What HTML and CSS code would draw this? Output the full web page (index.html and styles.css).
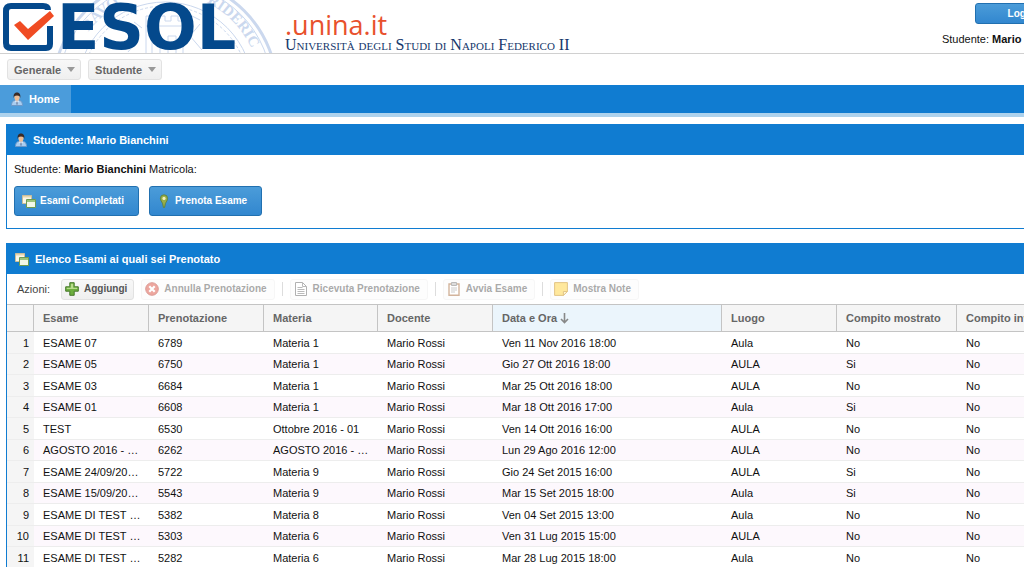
FILE: index.html
```html
<!DOCTYPE html>
<html lang="it">
<head>
<meta charset="utf-8">
<title>GESOL - Home</title>
<link rel="stylesheet" href="styles.css">
</head>
<body>
<svg class="defs" width="0" height="0" aria-hidden="true">
  <symbol id="user" viewBox="0 0 12 14">
    <path d="M.5 13.500c0-4 2-5 3.500-5h4c1.500 0 3.500 1 3.500 5z" fill="#a9cdf0" stroke="#6c98c8"/>
    <path d="M4 8.500h4l-2 4z" fill="#fff"/>
    <path d="M5.500 9.500h1v3h-1z" fill="#2c4c80"/>
    <ellipse cx="6" cy="5" rx="2.600" ry="3.700" fill="#f0bd94"/>
    <path d="M2.800 6C2 2 4 .4 6 .4S10 2 9.200 6C9 4 8 3.400 6 3.400S3 4 2.800 6z" fill="#3a2a26"/>
  </symbol>
  <symbol id="windows" viewBox="0 0 14 14">
    <path d="M.5 1.500h9v8h-9z" fill="#fbf7e8" stroke="#cdbd98"/>
    <path d="M1 2h8v1.500H1z" fill="#e4d6b0"/>
    <path d="M4.500 5.500h9v8h-9z" fill="#f3f8e8" stroke="#6e9a52"/>
    <path d="M5 6h8v2H5z" fill="#9cc47c"/>
  </symbol>
  <symbol id="pin" viewBox="0 0 14 14">
    <path d="M7 .8a3.600 3.600 0 0 1 3.600 3.600c0 2-1.600 3.600-2.200 5.200L7.600 13.400H6.400L5.600 9.600C5 8 3.400 6.400 3.400 4.400A3.600 3.600 0 0 1 7 .8z" fill="#98ae48" stroke="#5c7c34" stroke-width=".8"/>
    <circle cx="7" cy="4.400" r="1.600" fill="#f4f2c0"/>
  </symbol>
  <symbol id="plus" viewBox="0 0 14 14">
    <path d="M4.800.7h4.400v4.100h4.100v4.400H9.200v4.100H4.800V9.200H.7V4.800h4.100z" fill="#6cae3e" stroke="#47782c" stroke-linejoin="round"/>
    <path d="M5.800 1.700h2.400v4.100h4.100V7H1.700V5.800h4.100z" fill="#b8dc8c"/>
  </symbol>
  <symbol id="cancel" viewBox="0 0 14 14">
    <circle cx="7" cy="7" r="6.300" fill="#dc5040" stroke="#b83c30"/>
    <path d="M4.300 4.300l5.400 5.400M9.700 4.300L4.300 9.700" stroke="#fff" stroke-width="2.200"/>
  </symbol>
  <symbol id="page" viewBox="0 0 14 14">
    <path d="M1.500.5h7l4 4v9h-11z" fill="#fff" stroke="#666"/>
    <path d="M8.500.5v4h4M3.500 5.500h5M3.500 7.500h7M3.500 9.500h7M3.500 11.500h7" fill="none" stroke="#777"/>
  </symbol>
  <symbol id="clipboard" viewBox="0 0 14 14">
    <path d="M2 2h10v11.300H2z" fill="#fff" stroke="#a86c3c" stroke-width="1.400"/>
    <path d="M4.500.5h5v3h-5z" fill="#bbb" stroke="#777"/>
    <path d="M4 6h6M4 8h6M4 10h4" stroke="#999"/>
  </symbol>
  <symbol id="note" viewBox="0 0 14 14">
    <path d="M.6.600h12.800v8.900l-4 3.900H.6z" fill="#ffd23c" stroke="#c88c10"/>
    <path d="M9.400 13.400V9.500h4z" fill="#fff3b0" stroke="#c88c10"/>
  </symbol>
</svg>
<div class="app">
  <header class="banner">
    <svg class="seal" viewBox="0 0 230 53" aria-hidden="true">
      <defs><path id="ring" d="M20 88a95 95 0 0 1 190 0"/></defs>
      <g fill="none" stroke="#cbd8ee">
        <circle cx="115" cy="90" r="112" stroke-width="3"/>
        <circle cx="115" cy="90" r="107"/>
        <circle cx="115" cy="90" r="88"/>
        <circle cx="115" cy="90" r="84" stroke-dasharray="3 2"/>
        <path d="M96 53V16h6v5h6v-5h7v5h6v-5h7v5h5v32M96 26h37M102 53V36h8v17M118 53V36h8v17M76 30l12 10-10 12M150 24l-10 12 12 14M84 22l8 6M142 16l8 4"/>
      </g>
      <g class="motto">
        <text><textPath href="#ring" startOffset="60">RAVO</textPath></text>
        <text><textPath href="#ring" startOffset="192">RIDERIC</textPath></text>
      </g>
    </svg>
    <a class="brand" href="#" aria-label="GESOL unina.it">
      <svg class="check" viewBox="0 0 52 50" aria-hidden="true">
        <path d="M45 7Q45 3 40 3H8Q3 3 3 8v32q0 5 5 5h35q4 0 4-4V23" fill="none" stroke="#04498c" stroke-width="6"/>
        <path d="M11 22l6-4 8 8L47 8l4 5-26 24z" fill="#f04c23"/>
      </svg>
      <span class="word">ESOL</span>
      <span class="owner"><span class="domain">.unina.it</span><span class="university">Università degli Studi di Napoli Federico II</span></span>
    </a>
    <div class="account">
      <button class="btn logout" type="button">Logout</button>
      <span>Studente: <b>Mario Bianchini</b></span>
    </div>
  </header>
  <nav class="menus">
    <button class="tool menu" type="button">Generale</button>
    <button class="tool menu" type="button">Studente</button>
  </nav>
  <nav class="tabs"><a class="tab" href="#"><svg class="icon small"><use href="#user"/></svg>Home</a></nav>
  <main>
    <section class="panel">
      <h2><svg class="icon small"><use href="#user"/></svg>Studente: Mario Bianchini</h2>
      <div class="details">
        <p>Studente: <b>Mario Bianchini</b> Matricola:</p>
        <div class="buttons">
          <button class="btn" type="button"><svg class="icon"><use href="#windows"/></svg>Esami Completati</button>
          <button class="btn" type="button"><svg class="icon"><use href="#pin"/></svg>Prenota Esame</button>
        </div>
      </div>
    </section>
    <section class="panel">
      <h2><svg class="icon"><use href="#windows"/></svg>Elenco Esami ai quali sei Prenotato</h2>
      <div class="actions">
        <span class="label">Azioni:</span>
        <button class="tool" type="button"><svg class="icon"><use href="#plus"/></svg>Aggiungi</button>
        <button class="tool" type="button" disabled><svg class="icon"><use href="#cancel"/></svg>Annulla Prenotazione</button>
        <i class="sep"></i>
        <button class="tool" type="button" disabled><svg class="icon"><use href="#page"/></svg>Ricevuta Prenotazione</button>
        <i class="sep"></i>
        <button class="tool" type="button" disabled><svg class="icon"><use href="#clipboard"/></svg>Avvia Esame</button>
        <i class="sep"></i>
        <button class="tool" type="button" disabled><svg class="icon"><use href="#note"/></svg>Mostra Note</button>
      </div>
      <table>
        <colgroup><col class="c-num"><col class="c-std"><col class="c-std"><col class="c-mat"><col class="c-std"><col class="c-date"><col class="c-std"><col class="c-shown"><col></colgroup>
        <thead><tr><th></th><th>Esame</th><th>Prenotazione</th><th>Materia</th><th>Docente</th><th class="sorted">Data e Ora <svg class="arrow" viewBox="0 0 9 11"><path d="M4.500 0v9M1 6l3.500 3.500L8 6" fill="none" stroke="#888" stroke-width="1.600"/></svg></th><th>Luogo</th><th>Compito mostrato</th><th>Compito inviato</th></tr></thead>
        <tbody>
          <tr><td>1</td><td>ESAME 07</td><td>6789</td><td>Materia 1</td><td>Mario Rossi</td><td>Ven 11 Nov 2016 18:00</td><td>Aula</td><td>No</td><td>No</td></tr>
          <tr><td>2</td><td>ESAME 05</td><td>6750</td><td>Materia 1</td><td>Mario Rossi</td><td>Gio 27 Ott 2016 18:00</td><td>AULA</td><td>Si</td><td>No</td></tr>
          <tr><td>3</td><td>ESAME 03</td><td>6684</td><td>Materia 1</td><td>Mario Rossi</td><td>Mar 25 Ott 2016 18:00</td><td>AULA</td><td>No</td><td>No</td></tr>
          <tr><td>4</td><td>ESAME 01</td><td>6608</td><td>Materia 1</td><td>Mario Rossi</td><td>Mar 18 Ott 2016 17:00</td><td>Aula</td><td>Si</td><td>No</td></tr>
          <tr><td>5</td><td>TEST</td><td>6530</td><td>Ottobre 2016 - 01</td><td>Mario Rossi</td><td>Ven 14 Ott 2016 16:00</td><td>AULA</td><td>No</td><td>No</td></tr>
          <tr><td>6</td><td>AGOSTO 2016 - 001</td><td>6262</td><td>AGOSTO 2016 - 001</td><td>Mario Rossi</td><td>Lun 29 Ago 2016 12:00</td><td>AULA</td><td>No</td><td>No</td></tr>
          <tr><td>7</td><td>ESAME 24/09/2015 A</td><td>5722</td><td>Materia 9</td><td>Mario Rossi</td><td>Gio 24 Set 2015 16:00</td><td>AULA</td><td>Si</td><td>No</td></tr>
          <tr><td>8</td><td>ESAME 15/09/2015 A</td><td>5543</td><td>Materia 9</td><td>Mario Rossi</td><td>Mar 15 Set 2015 18:00</td><td>Aula</td><td>Si</td><td>No</td></tr>
          <tr><td>9</td><td>ESAME DI TEST 003</td><td>5382</td><td>Materia 8</td><td>Mario Rossi</td><td>Ven 04 Set 2015 13:00</td><td>Aula</td><td>No</td><td>No</td></tr>
          <tr><td>10</td><td>ESAME DI TEST 002</td><td>5303</td><td>Materia 6</td><td>Mario Rossi</td><td>Ven 31 Lug 2015 15:00</td><td>AULA</td><td>No</td><td>No</td></tr>
          <tr><td>11</td><td>ESAME DI TEST 001</td><td>5282</td><td>Materia 6</td><td>Mario Rossi</td><td>Mar 28 Lug 2015 18:00</td><td>Aula</td><td>No</td><td>No</td></tr>
        </tbody>
      </table>
    </section>
  </main>
</div>
</body>
</html>
```
FILE: styles.css
```css
* { box-sizing: border-box; }
body { margin: 0; background: #fff; color: #111; font: 11px/14px "Liberation Sans", Arial, sans-serif; overflow: hidden; }
button { font: bold 10px/14px "Liberation Sans", Arial, sans-serif; }
.defs { position: absolute; }
.app { min-width: 1080px; }
.icon { width: 14px; height: 14px; flex: none; }
.small { width: 12px; }

.banner { position: relative; display: flex; justify-content: space-between; min-height: 54px; padding: 3px 6px 0 3px; border-bottom: 1px solid #d0d0d0; overflow: hidden; }
.seal { position: absolute; left: 50px; top: 0; width: 230px; }
.motto { fill: #cbd8ee; font: bold 15px "Liberation Serif", serif; }
.brand { position: relative; display: flex; color: #04498c; text-decoration: none; }
.check { width: 52px; height: 50px; }
.word { width: 230px; padding-left: 2px; font: bold 62px/50px "DejaVu Sans", sans-serif; }
.owner { display: flex; flex-direction: column; padding-top: 9px; }
.domain { color: #e8512d; font: 27px/26px "Open Sans", sans-serif; }
.university { color: #15386c; font: small-caps 16px/14px "Liberation Serif", serif; white-space: nowrap; }
.account { display: flex; flex-direction: column; align-items: flex-end; gap: 8px; white-space: nowrap; }

.btn { display: flex; align-items: center; justify-content: center; gap: 4px; color: #fff; background: linear-gradient(#4b9cd9, #3287cf); border: 1px solid #2170b0; border-radius: 3px; min-height: 30px; padding: 0 14px 0 7px; }
.btn.logout { min-width: 99px; min-height: 21px; padding: 0 14px; }

.menus { display: flex; gap: 7px; padding: 5px 7px; }
.tool { display: flex; align-items: center; gap: 5px; min-height: 21px; padding: 0 6px 0 3px; color: #555; background: linear-gradient(#f8f8f8, #efefef); border: 1px solid #e2e2e2; border-radius: 3px; white-space: nowrap; }
.tool:disabled { padding-right: 7px; opacity: .5; border-color: #eee; background: #fdfdfd; }
.menu { color: #666; padding: 0 5px 0 6px; gap: 6px; font-size: 11px; }
.menu::after { content: ""; border: 4px solid transparent; border-top: 5px solid #999; border-bottom: 0; }

.tabs { display: flex; background: #107cd1; border-bottom: 4px solid #add2ed; }
.tab { display: flex; align-items: center; gap: 6px; min-height: 28px; padding: 0 11px; color: #fff; background: #4b9cdb; font-weight: bold; text-decoration: none; }

main { display: grid; gap: 14px; padding: 7px 6px; }
.panel { border: 1px solid #107cd1; }
h2 { display: flex; align-items: center; gap: 6px; margin: 0; min-height: 30px; padding: 0 8px; color: #fff; background: #107cd1; font-size: 11px; }
.details { padding: 7px 7px 12px; }
p { margin: 0 0 10px; }
.buttons { display: flex; gap: 10px; }
.actions { display: flex; align-items: center; gap: 7px; min-height: 30px; padding: 0 10px; }
.label { color: #444; padding-right: 4px; }
.sep { width: 1px; height: 14px; background: #ddd; }

table { width: 100%; table-layout: fixed; border-collapse: separate; border-spacing: 0; }
.c-num { width: 27px; }
.c-std { width: 115px; }
.c-mat { width: 114px; }
.c-date { width: 229px; }
.c-shown { width: 120px; }
th { height: 28px; padding: 0 9px; text-align: left; color: #666; background: #f5f5f5; border: solid #c4c4c4; border-width: 1px 1px 1px 0; white-space: nowrap; overflow: hidden; }
th.sorted { background: #ebf5fc; }
.arrow { width: 9px; height: 11px; vertical-align: -2px; }
td { height: 22px; padding: 0 7px 0 9px; border-bottom: 1px solid #ededed; white-space: nowrap; overflow: hidden; text-overflow: ellipsis; }
tr:nth-child(even) td { height: 21px; background: #fdf8fd; }
tr td:first-child { padding: 0 5px 0 0; text-align: right; background: #f5f5f5; }
```
